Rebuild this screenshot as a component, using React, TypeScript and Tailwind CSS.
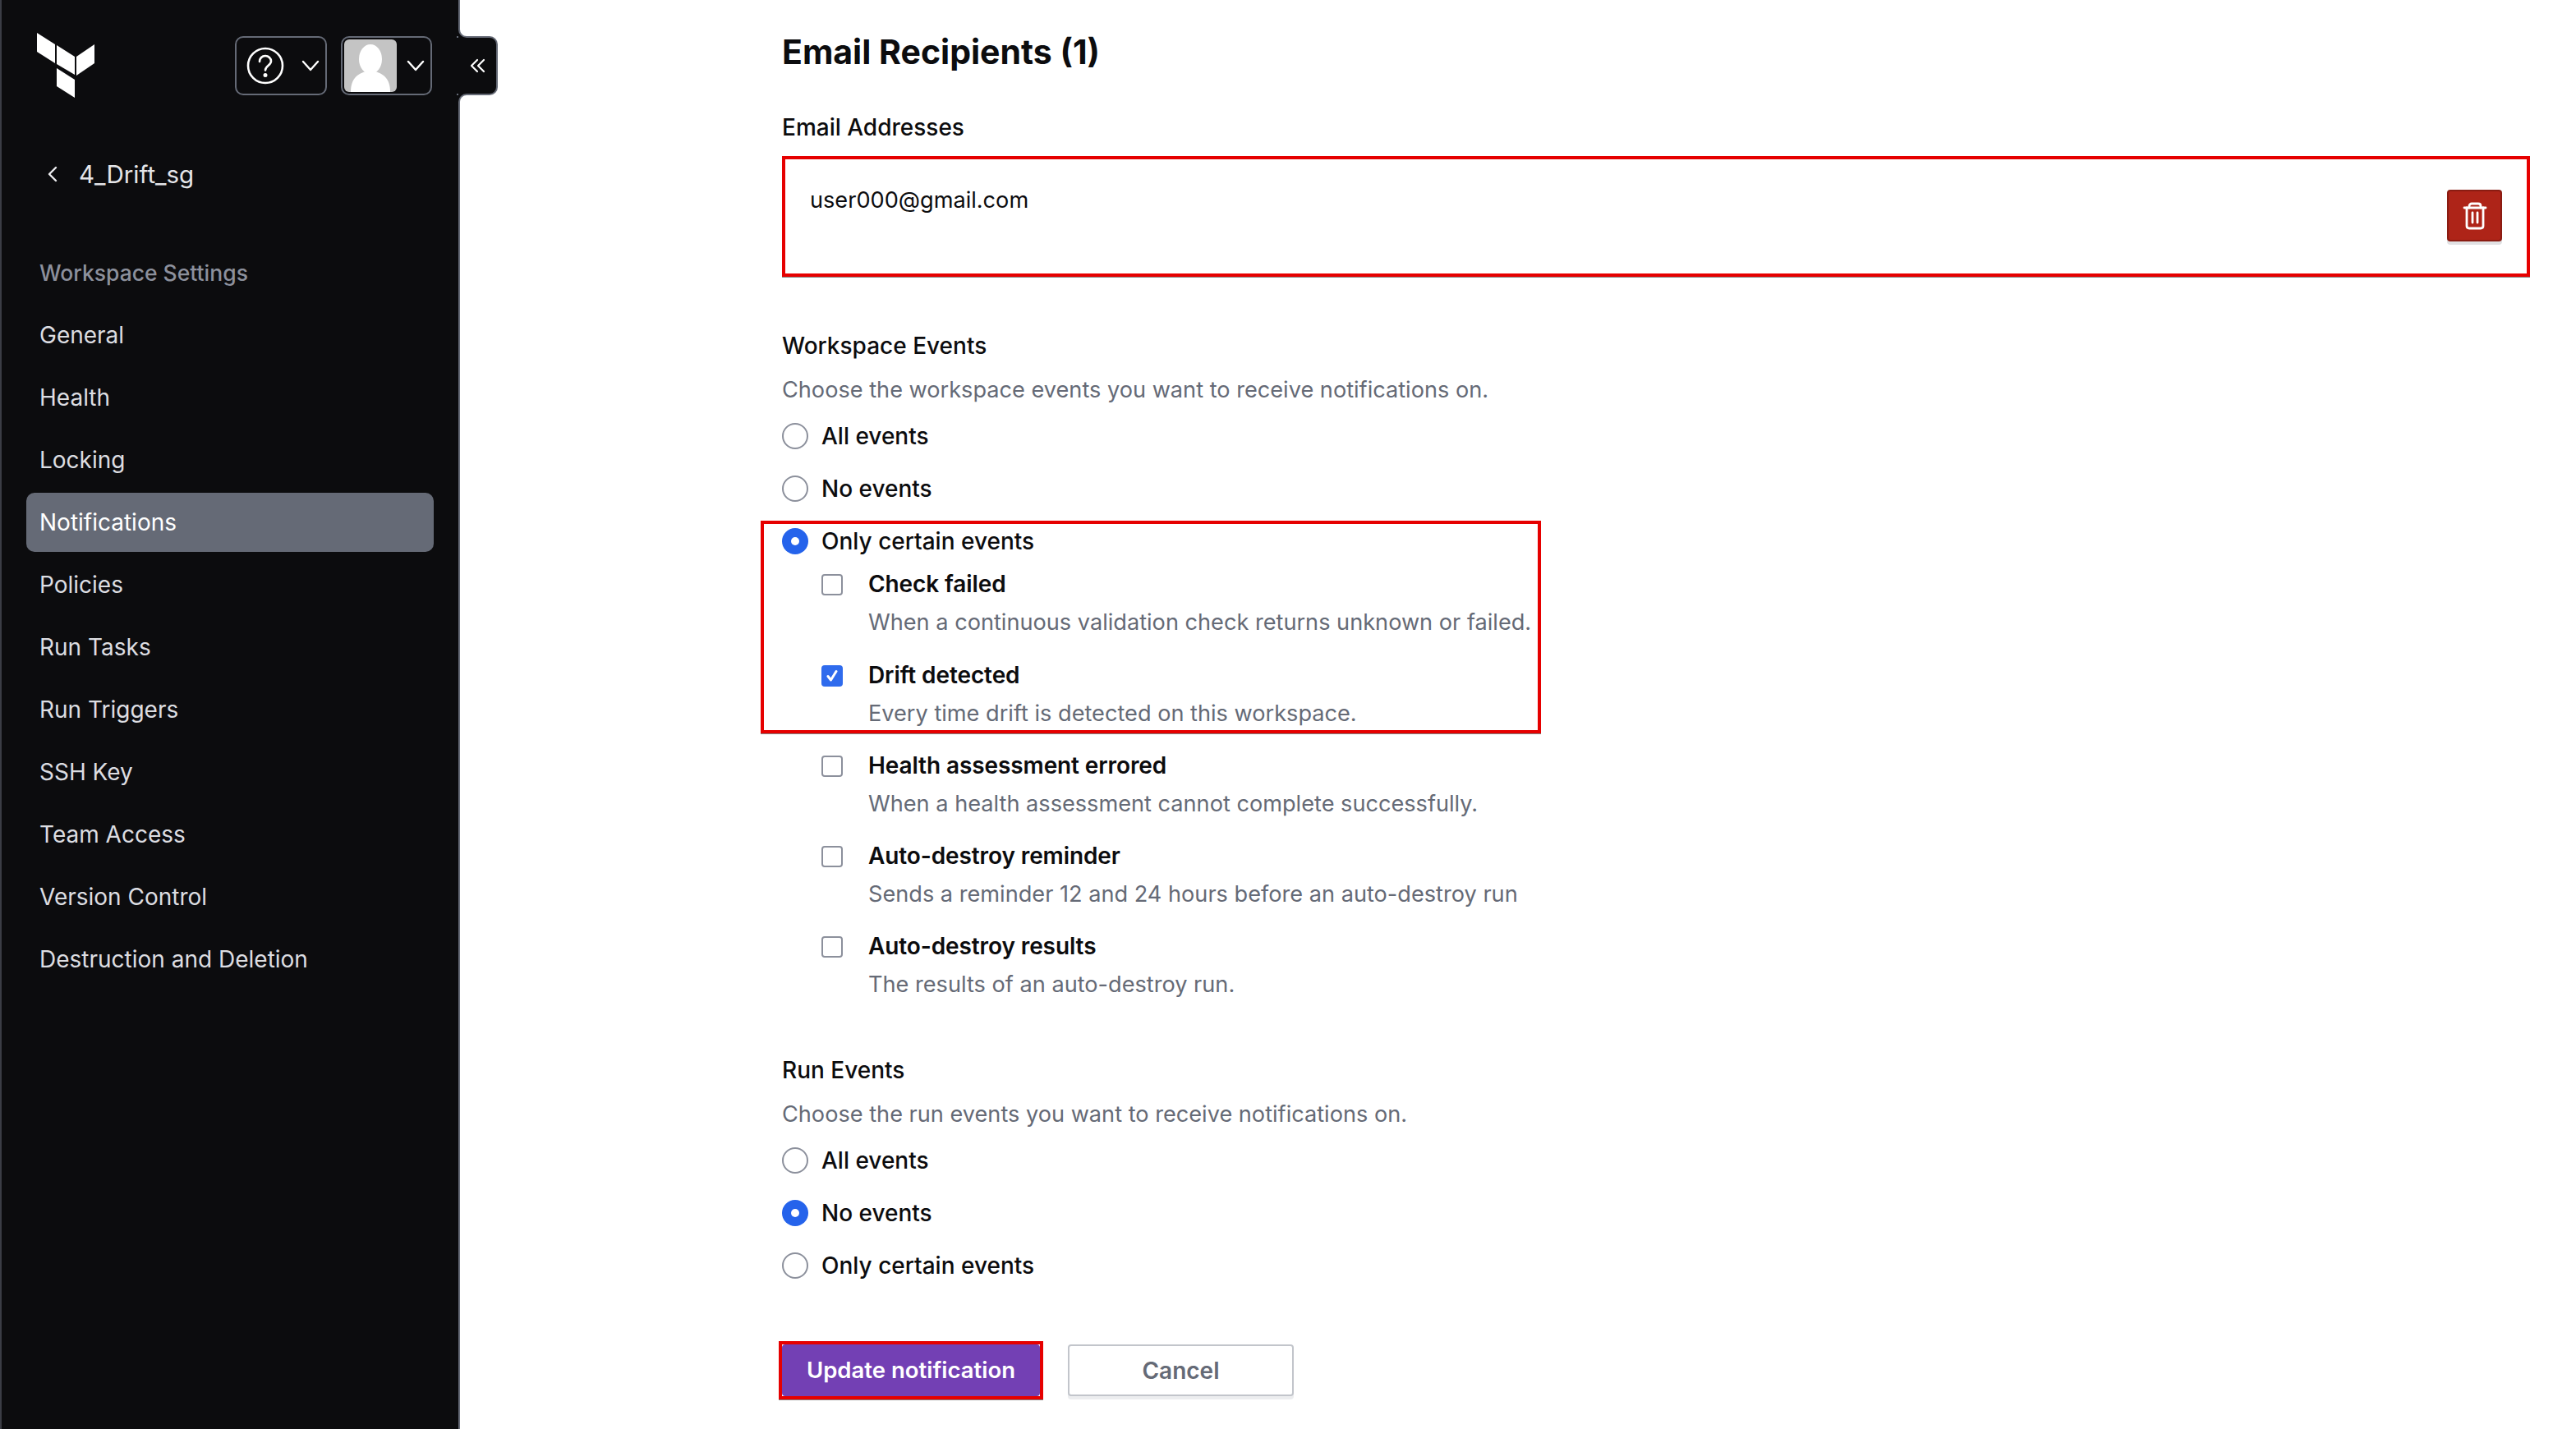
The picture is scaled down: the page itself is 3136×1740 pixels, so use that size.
const navItems = [
  'General',
  'Health',
  'Locking',
  'Notifications',
  'Policies',
  'Run Tasks',
  'Run Triggers',
  'SSH Key',
  'Team Access',
  'Version Control',
  'Destruction and Deletion',
]

const workspaceOptions = [
  { title: 'Health assessment errored', text: 'When a health assessment cannot complete successfully.' },
  { title: 'Auto-destroy reminder', text: 'Sends a reminder 12 and 24 hours before an auto-destroy run' },
  { title: 'Auto-destroy results', text: 'The results of an auto-destroy run.' },
]

function Chevron() {
  return (
    <svg width="24" height="24" viewBox="0 0 24 24" fill="none" stroke="#ffffff" strokeWidth="2.4" strokeLinecap="round" strokeLinejoin="round">
      <polyline points="3 7 12 17 21 7" />
    </svg>
  )
}

function Logo() {
  return (
    <svg width="70" height="80" viewBox="45 40 70 80" fill="#ffffff">
      <polygon points="45,40 67,54 67,77 45,63" />
      <polygon points="69,55 91,69 91,91 69,78" />
      <polygon points="93,69 115,54 115,77 93,92" />
      <polygon points="69,83 91,97 91,119 69,105" />
    </svg>
  )
}

function Radio({ label, checked = false }: { label: string; checked?: boolean }) {
  return (
    <div className="flex h-[36px] items-center">
      {checked ? (
        <span className="flex h-[32px] w-[32px] items-center justify-center rounded-full bg-[#2563eb]">
          <span className="h-[10px] w-[10px] rounded-full bg-white" />
        </span>
      ) : (
        <span className="h-[32px] w-[32px] rounded-full border-2 border-[#8c909c] bg-white" />
      )}
      <span className="ml-[16px] text-[28px] leading-[36px] font-medium text-[#0c0c0e]">{label}</span>
    </div>
  )
}

function CheckOption({ title, text, checked = false }: { title: string; text: string; checked?: boolean }) {
  return (
    <div className="ml-[48px] flex">
      <div className="flex h-[38px] items-center">
        {checked ? (
          <span className="flex h-[26px] w-[26px] items-center justify-center rounded-[4px] bg-[#2f6bed]">
            <svg width="18" height="18" viewBox="0 0 18 18" fill="none" stroke="#ffffff" strokeWidth="3" strokeLinecap="round" strokeLinejoin="round">
              <polyline points="4 9.5 7.5 14 14 3.5" />
            </svg>
          </span>
        ) : (
          <span className="h-[26px] w-[26px] rounded-[4px] border-2 border-[#8c909c] bg-white" />
        )}
      </div>
      <div className="ml-[31px]">
        <div className="text-[28px] leading-[36px] font-semibold tracking-[-0.1px] text-[#0c0c0e]">{title}</div>
        <div className="mt-[11px] text-[27.150px] leading-[36px] text-[#656a76]">{text}</div>
      </div>
    </div>
  )
}

export default function App() {
  return (
    <div className="flex h-[1740px] w-full overflow-hidden bg-white font-[Inter,sans-serif]">
      <aside className="relative w-[560px] shrink-0 border-x-2 border-l-[#3b3d45] border-r-[#656a76] bg-[#0c0c0e]">
        {/* Top bar */}
        <div className="mt-[44px] flex h-[72px] items-center">
          <div className="ml-[43px]">
            <Logo />
          </div>
          <div className="ml-[171px] flex h-[72px] w-[112px] items-center rounded-[10px] border-2 border-[#656a76] pl-[12px]">
            <svg width="46" height="46" viewBox="0 0 46 46" fill="none" stroke="#ffffff" strokeWidth="2.6" strokeLinecap="round">
              <circle cx="23" cy="23" r="21" />
              <path d="M16 18c0-4 3-7 7-7s7 3 7 6.500c0 5-7 5.500-7 11" />
              <circle cx="23" cy="34.500" r="1.200" fill="#ffffff" />
            </svg>
            <span className="ml-[20px]">
              <Chevron />
            </span>
          </div>
          <div className="ml-[17px] flex h-[72px] w-[111px] items-center rounded-[10px] border-2 border-[#656a76] pl-[2px]">
            <svg width="64" height="64" viewBox="0 0 64 64" className="rounded-[6px]">
              <rect width="64" height="64" fill="#c4c4c4" />
              <ellipse cx="32" cy="24" rx="14" ry="18" fill="#ffffff" />
              <path d="M8 64c0-16 8-24 24-26 16 2 24 10 24 26z" fill="#ffffff" />
            </svg>
            <span className="ml-[11px]">
              <Chevron />
            </span>
          </div>
        </div>

        {/* Collapse tab */}
        <div className="absolute left-[554px] top-[44px] flex h-[72px] w-[50px] items-center justify-center rounded-r-[10px] border-y-2 border-r-2 border-[#656a76] bg-[#0c0c0e] pl-[4px]">
          <svg width="20" height="20" viewBox="0 0 20 20" fill="none" stroke="#ffffff" strokeWidth="2.2" strokeLinecap="round" strokeLinejoin="round">
            <polyline points="9 3 2 10 9 17" />
            <polyline points="17 3 10 10 17 17" />
          </svg>
        </div>
        <span className="absolute left-[556px] top-[34px] h-[12px] w-[12px] bg-[#0c0c0e]">
          <span className="block h-full w-full rounded-bl-[10px] border-b-2 border-l-2 border-[#656a76] bg-white" />
        </span>
        <span className="absolute left-[556px] top-[114px] h-[12px] w-[12px] bg-[#0c0c0e]">
          <span className="block h-full w-full rounded-tl-[10px] border-t-2 border-l-2 border-[#656a76] bg-white" />
        </span>

        <div className="mt-[78px] flex h-[36px] items-center pl-[54px]">
          <svg width="16" height="22" viewBox="0 0 16 22" fill="none" stroke="#efeff1" strokeWidth="2.4" strokeLinecap="round" strokeLinejoin="round">
            <polyline points="12 3 4 11 12 19" />
          </svg>
          <span className="ml-[24px] text-[29.500px] leading-[36px] text-[#e4e5e8]">4_Drift_sg</span>
        </div>

        <div className="mt-[84px] pl-[46px] text-[26.500px] leading-[36px] font-medium text-[#8c909c]">Workspace Settings</div>

        <nav className="mt-[22px] flex flex-col gap-[4px] pl-[30px] pr-[30px]">
          {navItems.map((item) => (
            <div
              key={item}
              className={`flex h-[72px] items-center rounded-[10px] pl-[16px] text-[28px] ${
                item === 'Notifications' ? 'bg-[#656a76] text-white' : 'text-[#dcdde1]'
              }`}
            >
              {item}
            </div>
          ))}
        </nav>
      </aside>

      <main className="flex-1 pl-[392px] pt-[39px]">
        <h1 className="text-[41px] leading-[48px] font-bold text-[#0c0c0e]">Email Recipients (1)</h1>

        <div className="mt-[50px] text-[28px] leading-[36px] font-medium text-[#0c0c0e]">Email Addresses</div>
        <div className="mt-[17px] flex h-[147px] w-[2128px] items-start justify-between border-4 border-[#e60000] pl-[30px] pr-[30px] shadow-[0_1px_0_#808080]">
          <span className="mt-[32px] text-[27.150px] leading-[36px] text-[#0c0c0e]">user000@gmail.com</span>
          <button className="mt-[37px] flex h-[63px] w-[67px] items-center justify-center rounded-[4px] border-2 border-[#8a1c12] bg-[#ae2418] shadow-[0_4px_0_#e0e1e3]">
            <svg width="30" height="34" viewBox="0 0 30 34" fill="none" stroke="#ffffff" strokeWidth="2.8" strokeLinecap="round" strokeLinejoin="round">
              <path d="M2 7h26" />
              <path d="M8 7V5c0-2 1.500-3 3-3h8c1.500 0 3 1 3 3v2" />
              <path d="M5 7v22c0 2 1.500 3 3 3h14c1.500 0 3-1 3-3V7" />
              <path d="M12 13v12" />
              <path d="M18 13v12" />
            </svg>
          </button>
        </div>

        <div className="mt-[66px] text-[28px] leading-[36px] font-medium text-[#0c0c0e]">Workspace Events</div>
        <div className="mt-[18px] text-[27.150px] leading-[36px] text-[#656a76]">Choose the workspace events you want to receive notifications on.</div>
        <div className="mt-[20px] flex flex-col gap-[28px]">
          <Radio label="All events" />
          <Radio label="No events" />
        </div>

        <div className="relative mt-[28px]">
          <div className="absolute -left-[26px] -top-[7px] -bottom-[6px] w-[950px] border-4 border-[#e60000] shadow-[0_1px_0_#808080]" />
          <Radio label="Only certain events" checked />
          <div className="mt-[16px]">
            <CheckOption title="Check failed" text="When a continuous validation check returns unknown or failed." />
          </div>
          <div className="mt-[28px]">
            <CheckOption title="Drift detected" text="Every time drift is detected on this workspace." checked />
          </div>
        </div>

        {workspaceOptions.map((option) => (
          <div key={option.title} className="mt-[27px]">
            <CheckOption title={option.title} text={option.text} />
          </div>
        ))}

        <div className="mt-[68px] text-[28px] leading-[36px] font-medium text-[#0c0c0e]">Run Events</div>
        <div className="mt-[18px] text-[27.150px] leading-[36px] text-[#656a76]">Choose the run events you want to receive notifications on.</div>
        <div className="mt-[20px] flex flex-col gap-[28px]">
          <Radio label="All events" />
          <Radio label="No events" checked />
          <Radio label="Only certain events" />
        </div>

        <div className="-ml-[4px] mt-[74px] flex items-start gap-[30px]">
          <div className="border-4 border-[#e60000] shadow-[0_1px_0_#808080]">
            <button className="block h-[63px] w-[314px] rounded-[4px] bg-[#7340b4] text-[27.500px] font-semibold text-white">
              Update notification
            </button>
          </div>
          <button className="mt-[4px] h-[63px] w-[275px] rounded-[4px] border-2 border-[#c2c5cb] bg-white text-[28px] font-semibold text-[#656a76] shadow-[0_4px_0_#ecedef]">
            Cancel
          </button>
        </div>
      </main>
    </div>
  )
}
